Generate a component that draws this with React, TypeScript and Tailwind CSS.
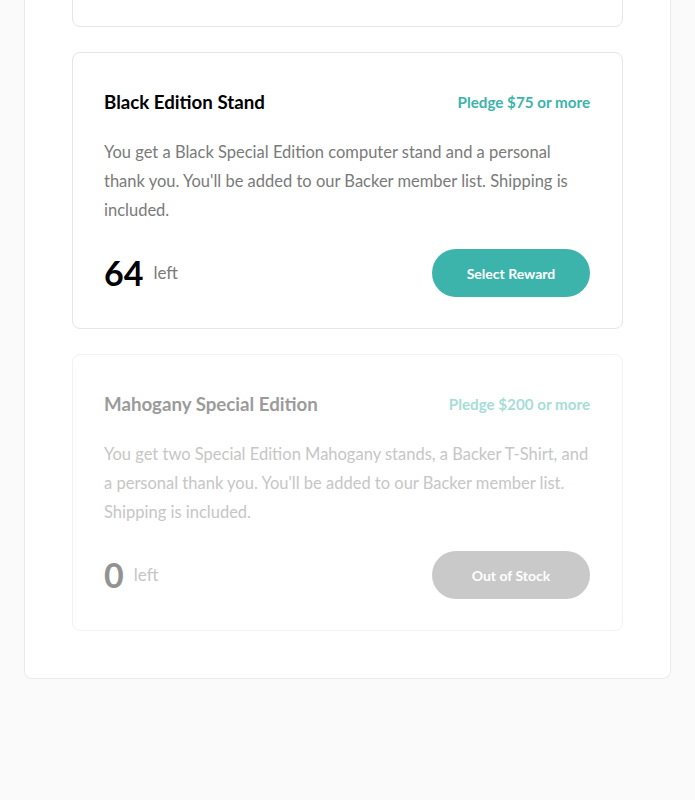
import React from "react";

type Reward = {
    title: string;
    pledge: string;
    description: string;
    left: number;
    disabled?: boolean;
};

const rewards: Reward[] = [
    {
        title: "Bamboo Stand",
        pledge: "Pledge $25 or more",
        description:
            "You get an ergonomic stand made of natural bamboo. You've helped us launch our promotional campaign, and you'll be added to a special Backer member list.",
        left: 101,
    },
    {
        title: "Black Edition Stand",
        pledge: "Pledge $75 or more",
        description:
            "You get a Black Special Edition computer stand and a personal thank you. You'll be added to our Backer member list. Shipping is included.",
        left: 64,
    },
    {
        title: "Mahogany Special Edition",
        pledge: "Pledge $200 or more",
        description:
            "You get two Special Edition Mahogany stands, a Backer T-Shirt, and a personal thank you. You'll be added to our Backer member list. Shipping is included.",
        left: 0,
        disabled: true,
    },
];

const RewardCard = ({reward}: { reward: Reward }) => {
    const off = reward.disabled;
    return (
        <div
            className={`rounded-lg border bg-white pl-[31px] pr-8 pt-8 pb-[31px] ${
                off ? "border-[#f2f2f2]" : "border-[#e6e6e6]"
            }`}
        >
            <div className="flex h-[34px] items-center justify-between">
                <h3 className={`text-[18.7px] font-bold ${off ? "text-[#9b9b9b]" : "text-black"}`}>
                    {reward.title}
                </h3>
                <span className={`text-[15.2px] font-bold ${off ? "text-[#a6ddd8]" : "text-[#3cb3ab]"}`}>
                    {reward.pledge}
                </span>
            </div>
            <p
                className={`mt-[19px] text-[16.5px] leading-[29px] ${
                    off ? "text-[#c6c6c6]" : "text-[#7a7a7a]"
                }`}
            >
                {reward.description}
            </p>
            <div className="mt-6 flex items-center justify-between">
                <div className="flex items-center gap-[10px]">
                    <span className={`text-[34px] font-bold leading-none ${off ? "text-[#929292]" : "text-black"}`}>
                        {reward.left}
                    </span>
                    <span className={`text-[17px] ${off ? "text-[#c6c6c6]" : "text-[#7a7a7a]"}`}>left</span>
                </div>
                <button
                    type="button"
                    disabled={off}
                    className={`h-12 w-[158px] rounded-full text-[14px] font-bold text-white ${
                        off ? "bg-[#c9c9c9]" : "bg-[#3cb4ab]"
                    }`}
                >
                    {off ? "Out of Stock" : "Select Reward"}
                </button>
            </div>
        </div>
    );
};

export default function App() {
    return (
        <div
            className="flex min-h-screen flex-col overflow-hidden bg-[#fafafa] px-6"
            style={{fontFamily: "Lato, 'Open Sans', sans-serif"}}
        >
            <div className="-mt-[250px] rounded-lg rounded-t-none border border-t-0 border-[#ebebeb] bg-white px-[47px] pb-[47px]">
                <div className="flex flex-col gap-[25px]">
                    {rewards.map((r) => (
                        <RewardCard key={r.title} reward={r}/>
                    ))}
                </div>
            </div>
        </div>
    );
}
